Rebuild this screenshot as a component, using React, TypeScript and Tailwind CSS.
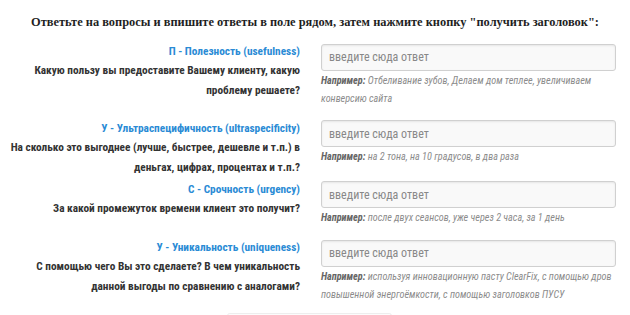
import React from "react";

const ROWS = [
  {
    label: "П - Полезность (usefulness)",
    question: "Какую пользу вы предоставите Вашему клиенту, какую проблему решаете?",
    hint: "Отбеливание зубов, Делаем дом теплее, увеличиваем конверсию сайта",
    mt: "mt-[12px]",
  },
  {
    label: "У - Ультраспецифичность (ultraspecificity)",
    question: "На сколько это выгоднее (лучше, быстрее, дешевле и т.п.) в деньгах, цифрах, процентах и т.п.?",
    hint: "на 2 тона, на 10 градусов, в два раза",
    mt: "mt-[12px]",
  },
  {
    label: "С - Срочность (urgency)",
    question: "За какой промежуток времени клиент это получит?",
    hint: "после двух сеансов, уже через 2 часа, за 1 день",
    mt: "mt-[3px]",
  },
  {
    label: "У - Уникальность (uniqueness)",
    question: "С помощью чего Вы это сделаете? В чем уникальность данной выгоды по сравнению с аналогами?",
    hint: "используя инновационную пасту ClearFix, с помощью дров повышенной энергоёмкости, с помощью заголовков ПУСУ",
    mt: "mt-[12px]",
  },
];

const narrow = "font-['Roboto',sans-serif] font-stretch-condensed";

export default function App() {
  return (
    <div className="w-[630px] h-[315px] overflow-hidden bg-white">
      <h2 className="pt-[13px] text-center text-[12.4px] leading-[18px] font-bold text-[#1f1f1f] font-['Liberation_Serif',serif]">
        Ответьте на вопросы и впишите ответы в поле рядом, затем нажмите кнопку "получить заголовок":
      </h2>

      {ROWS.map((row) => (
        <div key={row.label} className={`flex ${row.mt}`}>
          <div className={`w-[300px] text-right ${narrow}`}>
            <div className="text-[11.3px] leading-[18px] font-bold text-[#2a8bd5]">{row.label}</div>
            <div className="text-[11.3px] leading-[20px] font-bold text-[#333]">{row.question}</div>
          </div>
          <div className="ml-[21px] w-[295px]">
            <input
              type="text"
              placeholder="введите сюда ответ"
              className={`w-full h-[27px] px-[7px] rounded-[3px] border border-[#d0d0d0] bg-[#f9f9f9] shadow-[inset_0_1px_2px_rgba(0,0,0,0.08)] text-[12px] text-[#555] placeholder:text-[#888] outline-none ${narrow}`}
            />
            <p className={`mt-[1px] text-[10.2px] leading-[18px] italic text-[#8c8c8c] ${narrow}`}>
              <span className="font-bold text-[#666]">Например:</span> {row.hint}
            </p>
          </div>
        </div>
      ))}

      <div className="ml-[227px] mt-[9px] w-[165px] h-[10px] rounded-t-[3px] border-t border-x border-[#eee] bg-[#fcfcfc]" />
    </div>
  );
}
